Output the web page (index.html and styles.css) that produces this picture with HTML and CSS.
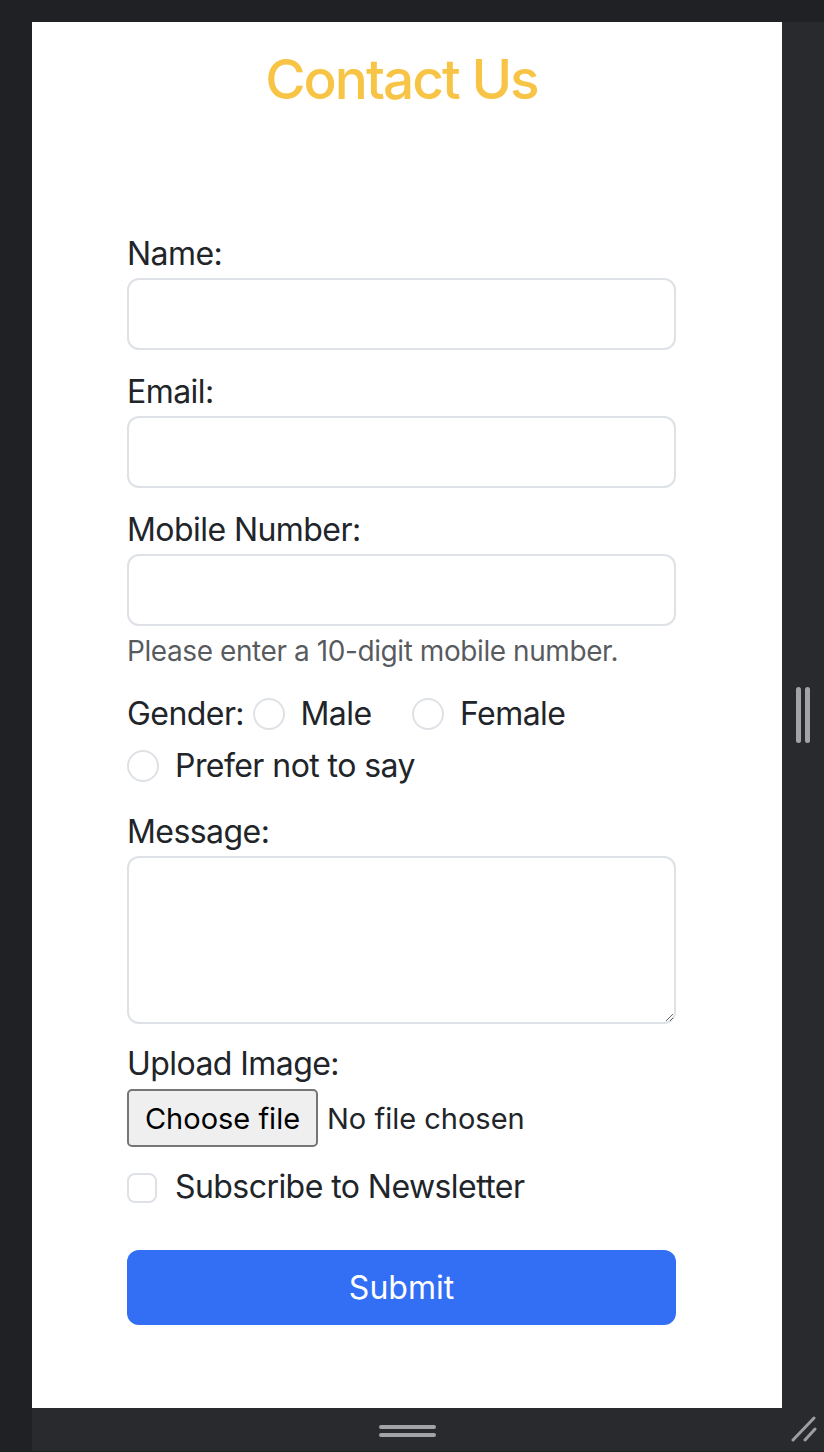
FILE: index.html
```html
<!DOCTYPE html>
<html lang="en">
<head>
<meta charset="utf-8">
<title>Contact Us</title>
<link rel="stylesheet" href="styles.css">
</head>
<body>
<div class="workspace">
  <main class="page">
    <div class="content">
      <h1 class="title">Contact Us</h1>
      <form class="form">
        <div class="field">
          <label class="label" for="name">Name:</label>
          <input class="control" id="name" type="text">
        </div>
        <div class="field">
          <label class="label" for="email">Email:</label>
          <input class="control" id="email" type="email">
        </div>
        <div class="field">
          <label class="label" for="mobile">Mobile Number:</label>
          <input class="control" id="mobile" type="tel">
          <div class="help">Please enter a 10-digit mobile number.</div>
        </div>
        <div class="gender">
          <span class="gender-label">Gender:</span>
          <span class="check inline"><input class="radio" type="radio" name="g" id="m"><label for="m">Male</label></span>
          <span class="check inline"><input class="radio" type="radio" name="g" id="f"><label for="f">Female</label></span>
          <span class="check inline"><input class="radio" type="radio" name="g" id="n"><label for="n">Prefer not to say</label></span>
        </div>
        <div class="field msg">
          <label class="label" for="message">Message:</label>
          <textarea class="control area" id="message"></textarea>
        </div>
        <div class="field upload">
          <span class="label">Upload Image:</span>
          <div class="file-row">
            <label class="file-btn">Choose file<input type="file" class="file-input"></label>
            <span class="file-name">No file chosen</span>
          </div>
        </div>
        <div class="check newsletter">
          <input class="box" type="checkbox" id="sub"><label for="sub">Subscribe to Newsletter</label>
        </div>
        <button class="submit" type="button">Submit</button>
      </form>
    </div>
  </main>
  <div class="side-handle"><span class="grip-v"></span><span class="grip-v"></span></div>
  <div class="bottom-handle"><span class="grip-h"></span><span class="grip-h"></span></div>
  <div class="corner">
    <svg width="26" height="26" viewBox="0 0 26 26"><path d="M2 24 L23 2 M14 24 L24 13" stroke="#9d9ea1" stroke-width="3" stroke-linecap="round" fill="none"/></svg>
  </div>
</div>
</body>
</html>
```
FILE: styles.css
```css
html, body {
  margin: 0;
  padding: 0;
}
body {
  background: #202124;
  font-family: Inter, "Noto Sans", "Liberation Sans", sans-serif;
  color: #212529;
  letter-spacing: -0.035em;
}
.workspace {
  margin: 22px 0 0 32px;
  width: 792px;
  height: 1429px;
  background: #292a2e;
  border-bottom: 1px solid #1f2023;
  display: grid;
  grid-template-columns: 750px 42px;
  grid-template-rows: 1386px 43px;
}
.page {
  background: #fff;
  overflow: hidden;
}
.content {
  width: 739px;
  padding-top: 24px;
}
.title {
  margin: 0 0 118px;
  text-align: center;
  font-size: 55px;
  font-weight: 500;
  line-height: 66px;
  letter-spacing: -0.036em;
  color: #f7c445;
}
.form {
  width: 549px;
  margin-left: 95px;
}
.field {
  margin-bottom: 18px;
}
.label {
  display: block;
  font-size: 32px;
  line-height: 48px;
}
.control {
  display: block;
  box-sizing: border-box;
  width: 100%;
  height: 72px;
  margin: 0;
  border: 2px solid #dee2e6;
  border-radius: 12px;
  background: #fff;
  font: inherit;
  font-size: 32px;
  padding: 0 24px;
}
.help {
  margin-top: 4px;
  font-size: 28px;
  line-height: 42px;
  letter-spacing: -0.015em;
  color: rgba(33, 37, 41, 0.75);
}
.gender {
  font-size: 32px;
  line-height: 48px;
  margin-bottom: 14px;
}
.check {
  display: block;
  min-height: 48px;
  padding-left: 48px;
  margin-bottom: 4px;
  font-size: 32px;
  line-height: 48px;
}
.check.inline {
  display: inline-block;
  margin-right: 32px;
}
.radio,
.box {
  float: left;
  width: 32px;
  height: 32px;
  margin: 8px 0 0 -48px;
  appearance: none;
  -webkit-appearance: none;
  border: 2px solid #dee2e6;
  background: #fff;
  box-sizing: border-box;
}
.radio {
  border-radius: 50%;
}
.box {
  width: 30px;
  height: 30px;
  margin-top: 10px;
  border-radius: 8px;
}
.msg .area {
  height: 168px;
  resize: vertical;
  padding: 12px 24px;
}
.msg {
  margin-bottom: 16px;
}
.upload {
  margin-bottom: 15px;
}
.file-row {
  display: flex;
  align-items: center;
  height: 60px;
}
.file-btn {
  box-sizing: border-box;
  height: 58px;
  width: 191px;
  display: flex;
  align-items: center;
  justify-content: center;
  background: #efefef;
  border: 2px solid #767676;
  border-radius: 5px;
  font-size: 29px;
  letter-spacing: 0;
  color: #000;
}
.file-input {
  display: none;
}
.file-name {
  margin-left: 9px;
  font-size: 29px;
  letter-spacing: 0;
  color: #212529;
}
.newsletter {
  margin-bottom: 39px;
}
.submit {
  display: block;
  width: 100%;
  height: 75px;
  border: 0;
  border-radius: 12px;
  background: #336ff5;
  color: #fff;
  font: inherit;
  font-size: 32px;
  line-height: 48px;
  padding: 0;
}
.side-handle {
  display: flex;
  justify-content: center;
  align-items: center;
  gap: 4px;
}
.grip-v {
  width: 5px;
  height: 56px;
  border-radius: 3px;
  background: #a2a3a5;
}
.bottom-handle {
  display: flex;
  flex-direction: column;
  justify-content: center;
  align-items: center;
  gap: 4px;
  padding-top: 2px;
}
.grip-h {
  width: 57px;
  height: 4px;
  border-radius: 2px;
  background: #a2a3a5;
}
.corner {
  display: flex;
  align-items: flex-end;
  justify-content: flex-start;
  padding: 0 0 9px 9px;
}
```
